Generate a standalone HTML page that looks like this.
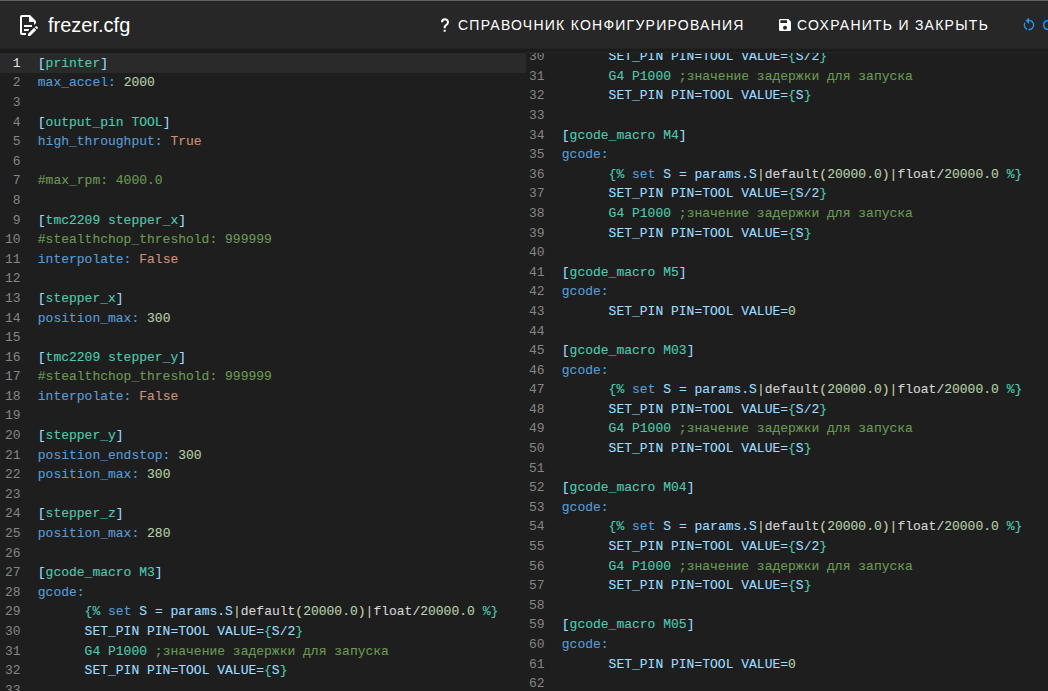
<!DOCTYPE html>
<html><head><meta charset="utf-8"><style>
html,body{margin:0;padding:0;width:1048px;height:691px;overflow:hidden;background:#1e1e1e;}
.bar{position:absolute;left:0;top:0;width:1048px;height:48px;background:#272727;border-top:1px solid #616161;box-shadow:inset 0 1px 0 #232323;box-sizing:border-box;font-family:"Liberation Sans",sans-serif;color:#fff;}
.band{position:absolute;left:0;top:48px;width:1048px;height:5px;background:#1c1c1c;border-top:1px solid #222;box-sizing:border-box;}
.title{position:absolute;left:48px;top:12px;font-size:20px;line-height:24px;white-space:nowrap;}
.btn{position:absolute;top:16px;font-size:14px;line-height:16px;letter-spacing:1.25px;white-space:nowrap;}
.ed{position:absolute;top:53px;bottom:0;overflow:hidden;background:#1e1e1e;font-family:"Liberation Mono",monospace;}
.left{left:0;width:1048px;}
.right{left:526px;right:0;border-top:1px solid #252525;top:52px;}
.inner{position:absolute;left:0;top:0;}
.right .inner{left:-2px;top:-6.6px;}
.gut{position:absolute;left:0;top:0.8px;width:20.5px;}
.code{position:absolute;left:37.8px;top:0.8px;}
.ln{height:19.6px;line-height:19.6px;text-align:right;color:#858585;font-size:13px;}
.ln.act{color:#e6e6e6;}
.cl{height:19.6px;line-height:19.6px;white-space:pre;font-size:13px;color:#d4d4d4;-webkit-text-stroke:0.12px currentColor;}
.hl{position:absolute;left:0;top:0;width:1048px;height:19.6px;background:#2a2a2a;}
.b{color:#9cdcfe}
.s{color:#4ec9b0}
.k{color:#569cd6}
.n{color:#b5cea8}
.o{color:#ce9178}
.c{color:#6a9955}
.t{color:#4ec9b0}
.v{color:#9cdcfe}
.w{color:#d4d4d4}
.y{color:#c8cfa6}

</style></head><body>
<div class="bar">
<svg style="position:absolute;left:16px;top:12px" width="24" height="24" viewBox="0 0 24 24"><path fill="#fff" d="M8,12H16V14H8V12M10,20H6V4H13V9H18V12.1L20,10.1V8L14,2H6A2,2 0 0,0 4,4V20A2,2 0 0,0 6,22H10V20M8,18H12.1L13,17.1V16H8V18M20.2,13C20.3,13 20.5,13.1 20.6,13.2L21.9,14.5C22.1,14.7 22.1,15.1 21.9,15.3L20.9,16.3L18.8,14.2L19.8,13.2C19.9,13.1 20,13 20.2,13M20.2,16.9L14.1,23H12V20.9L18.1,14.8L20.2,16.9Z"/></svg>
<div class="title">frezer.cfg</div>
<svg style="position:absolute;left:437px;top:16px" width="16" height="16" viewBox="0 0 24 24"><path fill="#fff" d="M10,19H13V22H10V19M12,2C17.35,2.22 19.68,7.62 16.5,11.67C15.67,12.67 14.33,13.33 13.67,14.17C13,15 13,16 13,17H10C10,15.33 10,13.92 10.67,12.92C11.33,11.92 12.67,11.33 13.5,10.67C15.92,8.43 15.32,5.26 12,5A3,3 0 0,0 9,8H6A6,6 0 0,1 12,2Z"/></svg>
<div class="btn" style="left:458px">СПРАВОЧНИК КОНФИГУРИРОВАНИЯ</div>
<svg style="position:absolute;left:777px;top:16px" width="16" height="16" viewBox="0 0 24 24"><path fill="#fff" d="M15,9H5V5H15M12,19A3,3 0 0,1 9,16A3,3 0 0,1 12,13A3,3 0 0,1 15,16A3,3 0 0,1 12,19M17,3H5C3.89,3 3,3.9 3,5V19A2,2 0 0,0 5,21H19A2,2 0 0,0 21,19V7L17,3Z"/></svg>
<div class="btn" style="left:797px">СОХРАНИТЬ И ЗАКРЫТЬ</div>
<svg style="position:absolute;left:1021px;top:16px" width="16" height="16" viewBox="0 0 24 24"><path fill="#2196f3" d="M12,4C14.1,4 16.1,4.8 17.6,6.3C20.7,9.4 20.7,14.5 17.6,17.6C15.8,19.5 13.3,20.2 10.9,19.9L11.4,17.9C13.1,18.1 14.9,17.5 16.2,16.2C18.5,13.9 18.5,10.1 16.2,7.7C15.1,6.6 13.5,6 12,6V10.6L7,5.6L12,0.6V4M6.3,17.6C3.7,15 3.3,11 5.1,7.9L6.6,9.4C5.5,11.6 5.9,14.4 7.8,16.2C8.3,16.7 8.9,17.1 9.6,17.4L9,19.4C8,19 7.1,18.4 6.3,17.6Z"/></svg>
<div class="btn" style="left:1042.5px;color:#2196f3">СОХРАНИТЬ</div>
</div>
<div class="band"></div>

<div class="ed left"><div class="hl"></div><div class="inner"><div class="gut"><div class="ln act">1</div><div class="ln">2</div><div class="ln">3</div><div class="ln">4</div><div class="ln">5</div><div class="ln">6</div><div class="ln">7</div><div class="ln">8</div><div class="ln">9</div><div class="ln">10</div><div class="ln">11</div><div class="ln">12</div><div class="ln">13</div><div class="ln">14</div><div class="ln">15</div><div class="ln">16</div><div class="ln">17</div><div class="ln">18</div><div class="ln">19</div><div class="ln">20</div><div class="ln">21</div><div class="ln">22</div><div class="ln">23</div><div class="ln">24</div><div class="ln">25</div><div class="ln">26</div><div class="ln">27</div><div class="ln">28</div><div class="ln">29</div><div class="ln">30</div><div class="ln">31</div><div class="ln">32</div><div class="ln">33</div></div><div class="code"><div class="cl act"><span class="b">[</span><span class="s">printer</span><span class="b">]</span></div><div class="cl"><span class="k">max_accel:</span> <span class="n">2000</span></div><div class="cl">&#8203;</div><div class="cl"><span class="b">[</span><span class="s">output_pin TOOL</span><span class="b">]</span></div><div class="cl"><span class="k">high_throughput:</span> <span class="o">True</span></div><div class="cl">&#8203;</div><div class="cl"><span class="c">#max_rpm: 4000.0</span></div><div class="cl">&#8203;</div><div class="cl"><span class="b">[</span><span class="s">tmc2209 stepper_x</span><span class="b">]</span></div><div class="cl"><span class="c">#stealthchop_threshold: 999999</span></div><div class="cl"><span class="k">interpolate:</span> <span class="o">False</span></div><div class="cl">&#8203;</div><div class="cl"><span class="b">[</span><span class="s">stepper_x</span><span class="b">]</span></div><div class="cl"><span class="k">position_max:</span> <span class="n">300</span></div><div class="cl">&#8203;</div><div class="cl"><span class="b">[</span><span class="s">tmc2209 stepper_y</span><span class="b">]</span></div><div class="cl"><span class="c">#stealthchop_threshold: 999999</span></div><div class="cl"><span class="k">interpolate:</span> <span class="o">False</span></div><div class="cl">&#8203;</div><div class="cl"><span class="b">[</span><span class="s">stepper_y</span><span class="b">]</span></div><div class="cl"><span class="k">position_endstop:</span> <span class="n">300</span></div><div class="cl"><span class="k">position_max:</span> <span class="n">300</span></div><div class="cl">&#8203;</div><div class="cl"><span class="b">[</span><span class="s">stepper_z</span><span class="b">]</span></div><div class="cl"><span class="k">position_max:</span> <span class="n">280</span></div><div class="cl">&#8203;</div><div class="cl"><span class="b">[</span><span class="s">gcode_macro M3</span><span class="b">]</span></div><div class="cl"><span class="k">gcode:</span></div><div class="cl">      <span class="t">{%</span> <span class="k">set</span> <span class="v">S</span> <span class="v">=</span> <span class="v">params.S</span><span class="y">|</span><span class="w">default</span><span class="y">(</span><span class="n">20000.0</span><span class="y">)</span><span class="y">|</span><span class="w">float</span><span class="w">/</span><span class="n">20000.0</span> <span class="t">%}</span></div><div class="cl">      <span class="v">SET_PIN PIN=TOOL VALUE=</span><span class="t">{</span><span class="v">S/2</span><span class="t">}</span></div><div class="cl">      <span class="t">G4 P1000</span> <span class="c">;значение задержки для запуска</span></div><div class="cl">      <span class="v">SET_PIN PIN=TOOL VALUE=</span><span class="t">{</span><span class="v">S</span><span class="t">}</span></div><div class="cl">&#8203;</div></div></div></div>
<div class="ed right"><div class="inner"><div class="gut"><div class="ln">30</div><div class="ln">31</div><div class="ln">32</div><div class="ln">33</div><div class="ln">34</div><div class="ln">35</div><div class="ln">36</div><div class="ln">37</div><div class="ln">38</div><div class="ln">39</div><div class="ln">40</div><div class="ln">41</div><div class="ln">42</div><div class="ln">43</div><div class="ln">44</div><div class="ln">45</div><div class="ln">46</div><div class="ln">47</div><div class="ln">48</div><div class="ln">49</div><div class="ln">50</div><div class="ln">51</div><div class="ln">52</div><div class="ln">53</div><div class="ln">54</div><div class="ln">55</div><div class="ln">56</div><div class="ln">57</div><div class="ln">58</div><div class="ln">59</div><div class="ln">60</div><div class="ln">61</div><div class="ln">62</div></div><div class="code"><div class="cl">      <span class="v">SET_PIN PIN=TOOL VALUE=</span><span class="t">{</span><span class="v">S/2</span><span class="t">}</span></div><div class="cl">      <span class="t">G4 P1000</span> <span class="c">;значение задержки для запуска</span></div><div class="cl">      <span class="v">SET_PIN PIN=TOOL VALUE=</span><span class="t">{</span><span class="v">S</span><span class="t">}</span></div><div class="cl">&#8203;</div><div class="cl"><span class="b">[</span><span class="s">gcode_macro M4</span><span class="b">]</span></div><div class="cl"><span class="k">gcode:</span></div><div class="cl">      <span class="t">{%</span> <span class="k">set</span> <span class="v">S</span> <span class="v">=</span> <span class="v">params.S</span><span class="y">|</span><span class="w">default</span><span class="y">(</span><span class="n">20000.0</span><span class="y">)</span><span class="y">|</span><span class="w">float</span><span class="w">/</span><span class="n">20000.0</span> <span class="t">%}</span></div><div class="cl">      <span class="v">SET_PIN PIN=TOOL VALUE=</span><span class="t">{</span><span class="v">S/2</span><span class="t">}</span></div><div class="cl">      <span class="t">G4 P1000</span> <span class="c">;значение задержки для запуска</span></div><div class="cl">      <span class="v">SET_PIN PIN=TOOL VALUE=</span><span class="t">{</span><span class="v">S</span><span class="t">}</span></div><div class="cl">&#8203;</div><div class="cl"><span class="b">[</span><span class="s">gcode_macro M5</span><span class="b">]</span></div><div class="cl"><span class="k">gcode:</span></div><div class="cl">      <span class="v">SET_PIN PIN=TOOL VALUE=</span><span class="n">0</span></div><div class="cl">&#8203;</div><div class="cl"><span class="b">[</span><span class="s">gcode_macro M03</span><span class="b">]</span></div><div class="cl"><span class="k">gcode:</span></div><div class="cl">      <span class="t">{%</span> <span class="k">set</span> <span class="v">S</span> <span class="v">=</span> <span class="v">params.S</span><span class="y">|</span><span class="w">default</span><span class="y">(</span><span class="n">20000.0</span><span class="y">)</span><span class="y">|</span><span class="w">float</span><span class="w">/</span><span class="n">20000.0</span> <span class="t">%}</span></div><div class="cl">      <span class="v">SET_PIN PIN=TOOL VALUE=</span><span class="t">{</span><span class="v">S/2</span><span class="t">}</span></div><div class="cl">      <span class="t">G4 P1000</span> <span class="c">;значение задержки для запуска</span></div><div class="cl">      <span class="v">SET_PIN PIN=TOOL VALUE=</span><span class="t">{</span><span class="v">S</span><span class="t">}</span></div><div class="cl">&#8203;</div><div class="cl"><span class="b">[</span><span class="s">gcode_macro M04</span><span class="b">]</span></div><div class="cl"><span class="k">gcode:</span></div><div class="cl">      <span class="t">{%</span> <span class="k">set</span> <span class="v">S</span> <span class="v">=</span> <span class="v">params.S</span><span class="y">|</span><span class="w">default</span><span class="y">(</span><span class="n">20000.0</span><span class="y">)</span><span class="y">|</span><span class="w">float</span><span class="w">/</span><span class="n">20000.0</span> <span class="t">%}</span></div><div class="cl">      <span class="v">SET_PIN PIN=TOOL VALUE=</span><span class="t">{</span><span class="v">S/2</span><span class="t">}</span></div><div class="cl">      <span class="t">G4 P1000</span> <span class="c">;значение задержки для запуска</span></div><div class="cl">      <span class="v">SET_PIN PIN=TOOL VALUE=</span><span class="t">{</span><span class="v">S</span><span class="t">}</span></div><div class="cl">&#8203;</div><div class="cl"><span class="b">[</span><span class="s">gcode_macro M05</span><span class="b">]</span></div><div class="cl"><span class="k">gcode:</span></div><div class="cl">      <span class="v">SET_PIN PIN=TOOL VALUE=</span><span class="n">0</span></div><div class="cl">&#8203;</div></div></div></div>
</body></html>
